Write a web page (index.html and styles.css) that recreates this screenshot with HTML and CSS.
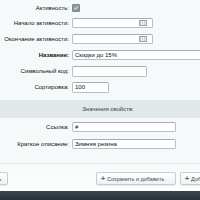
FILE: index.html
```html
<!DOCTYPE html>
<html>
<head>
<meta charset="utf-8">
<link rel="stylesheet" href="styles.css">
</head>
<body>
<div class="page">
  <div class="form">
    <div class="row row-first">
      <div class="label">Активность:</div>
      <div class="field"><span class="check"><svg width="7" height="7" viewBox="0 0 7 7"><path d="M1.5 3.6 L3 5 L5.6 1.8" fill="none" stroke="#fff" stroke-width="1"/></svg></span></div>
    </div>
    <div class="row">
      <div class="label">Начало активности:</div>
      <div class="field"><span class="input w-date"><span class="cal"></span></span></div>
    </div>
    <div class="row">
      <div class="label">Окончание активности:</div>
      <div class="field"><span class="input w-date"><span class="cal"></span></span></div>
    </div>
    <div class="row">
      <div class="label bold">Название:</div>
      <div class="field"><span class="input w-full">Скидки до 15%</span></div>
    </div>
    <div class="row">
      <div class="label">Символьный код:</div>
      <div class="field"><span class="input w-code"></span></div>
    </div>
    <div class="row">
      <div class="label">Сортировка:</div>
      <div class="field"><span class="input w-sort">100</span></div>
    </div>
    <div class="band">Значения свойств:</div>
    <div class="row">
      <div class="label">Ссылка:</div>
      <div class="field"><span class="input w-prop">#</span></div>
    </div>
    <div class="row">
      <div class="label">Краткое описание:</div>
      <div class="field"><span class="input w-prop">Зимняя резина</span></div>
    </div>
  </div>
  <div class="btns">
    <span class="btn btn-save">Сохранить</span>
    <span class="btn btn-add"><span class="plus">+</span>Сохранить и добавить</span>
    <span class="btn btn-next"><span class="plus">+</span>Добавить</span>
  </div>
  <div class="footer"></div>
</div>
</body>
</html>
```
FILE: styles.css
```css
html, body {
  margin: 0;
  padding: 0;
}
body {
  width: 200px;
  height: 200px;
  overflow: hidden;
  background: #f5f9f9;
  font-family: "Liberation Sans", Arial, sans-serif;
  font-size: 6px;
  color: #000;
}
.page {
  width: 216px;
  display: flex;
  flex-direction: column;
  height: 200px;
}
.form {
  display: flex;
  flex-direction: column;
  padding-top: 1px;
  height: 162px;
}
.row {
  display: grid;
  grid-template-columns: 72px 1fr;
  align-items: center;
  height: 16px;
}
.row-first {
  height: 14px;
}
.label {
  text-align: right;
  padding-right: 3px;
  color: #111;
  white-space: nowrap;
}
.label.bold {
  font-weight: bold;
}
.field {
  display: flex;
  align-items: center;
}
.check {
  width: 6px;
  height: 6px;
  border-radius: 1px;
  background: #8e9aa0;
  border: 0.5px solid #7b878d;
  display: flex;
  align-items: center;
  justify-content: center;
}
.check svg {
  width: 6px;
  height: 6px;
}
.input {
  box-sizing: border-box;
  height: 10px;
  background: #fff;
  border: 1px solid #b6bfc4;
  border-top-color: #a3adb3;
  border-radius: 2px;
  display: flex;
  align-items: center;
  justify-content: space-between;
  padding: 0 2px;
  font-size: 6px;
  color: #111;
}
.w-date { width: 81px; }
.w-full { width: 150px; }
.w-code { width: 75px; height: 11px; }
.w-sort { width: 37px; height: 11px; }
.w-prop { width: 104px; }
.cal {
  margin-left: auto;
  margin-right: 3px;
  width: 6px;
  height: 4px;
  border: 0.5px solid #9aa3a8;
  background: repeating-linear-gradient(90deg, #c9cfd2 0 1px, #f0f2f3 1px 2px);
}
.band {
  margin-top: 5px;
  margin-bottom: 1px;
  height: 18px;
  background: #e0e8ea;
  display: flex;
  align-items: center;
  justify-content: center;
  color: #36454b;
}
.band + .row {
  margin-bottom: 1px;
}
.btns {
  box-sizing: border-box;
  height: 28px;
  border-top: 1px solid #dfe6e8;
  background: linear-gradient(#f7fafa, #fdfefe);
  display: flex;
  align-items: center;
  padding-top: 2px;
}
.btn {
  box-sizing: border-box;
  height: 13px;
  display: flex;
  align-items: center;
  background: linear-gradient(#ffffff, #eef1f2);
  border: 1px solid #c5cdd1;
  border-radius: 2px;
  box-shadow: 0 1px 1px rgba(0,0,0,0.08);
  color: #3d4a52;
  font-size: 5.5px;
  padding: 0 4px;
  white-space: nowrap;
}
.btn-save {
  margin-left: -31px;
  width: 39px;
}
.btn-add {
  margin-left: auto;
  width: 80px;
}
.btn-next {
  margin-left: 4px;
  width: 36px;
}
.plus {
  font-weight: bold;
  font-size: 7px;
  margin-right: 2px;
  color: #555f66;
}
.footer {
  flex: 1;
  background: linear-gradient(#39454f, #27313a);
}
```
